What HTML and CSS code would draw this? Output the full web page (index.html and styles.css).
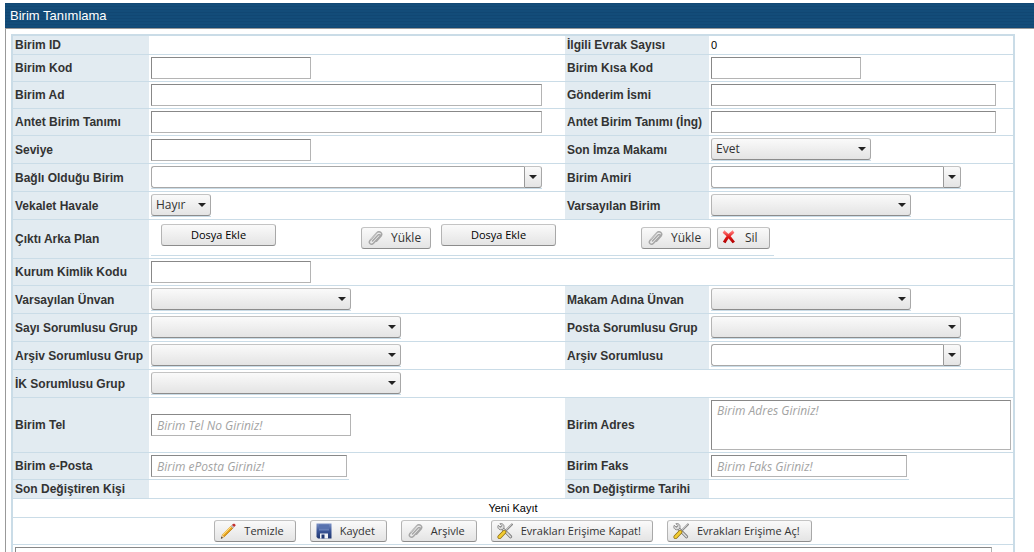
FILE: index.html
```html
<!DOCTYPE html>
<html lang="tr">
<head>
<meta charset="utf-8">
<title>Birim Tanımlama</title>
<link rel="stylesheet" href="styles.css">
</head>
<body>
<svg class="defs" aria-hidden="true">
  <defs>
    <linearGradient id="red" x1="0" y1="0" x2="0" y2="1"><stop offset="0" stop-color="#f77"/><stop offset=".5" stop-color="#e01818"/><stop offset="1" stop-color="#b00000"/></linearGradient>
    <linearGradient id="blue" x1="0" y1="0" x2="0" y2="1"><stop offset="0" stop-color="#7d93c6"/><stop offset=".5" stop-color="#3a5597"/><stop offset="1" stop-color="#1f3670"/></linearGradient>
    <symbol id="clip" viewBox="0 0 16 16"><path d="M5.500 11 10.800 5.200c1.500-1.600 3.200-.2 1.900 1.300L6.500 13.300c-2.300 2.300-5.500-.2-3.500-2.900L9.800 2.800c2.600-2.500 6.300.3 4.300 3.300L9.500 11.300" fill="none" stroke="#a6a6a6" stroke-width="1.500" stroke-linecap="round"/><path d="M3.500 9.400 10.100 2.300" fill="none" stroke="#d8d8d8" stroke-width=".7"/></symbol>
    <symbol id="cross" viewBox="0 0 16 16"><path d="M2.500 1.500C6 4 10 8.500 12.800 12.500M12.500 1.500C8.500 4.500 5.500 8 3.200 12.500" fill="none" stroke="url(#red)" stroke-width="2.900"/></symbol>
    <symbol id="pencil" viewBox="0 0 16 16"><path d="M1 15.500 2 11.800 11.500 2.300 13.800 4.500 4.300 14Z" fill="#e9a820"/><path d="M2.800 12 12 3" stroke="#ffe08a" stroke-width="1"/><path d="M3.700 14 13.500 4.500" stroke="#b97a14" stroke-width=".8"/><path d="M1 15.500 2 11.800 4.300 14Z" fill="#e8c9a0"/><path d="M.8 15.700 1.500 13.500 3 15Z" fill="#333"/><path d="M10.700 3.200 12 1.900 14.200 4.100 12.900 5.400Z" fill="#bcbcc4"/><path d="M12 1.900C13 .2 15.700.7 15.500 2.600L14.200 4.100Z" fill="#c22f2f"/></symbol>
    <symbol id="disk" viewBox="0 0 16 16"><path d="M.5.500h15v15H2l-1.500-1.500Z" fill="url(#blue)"/><path d="M3 1h10v6.500H3Z" fill="#6880b8"/><path d="M3 3h10M3 5h10" stroke="#4560a2" stroke-width=".8"/><path d="M4 10.500h8v5H4Z" fill="#f1f3f7"/><path d="M5.500 11.500h3v4h-3Z" fill="#1f3670"/></symbol>
    <symbol id="tools" viewBox="0 0 16 16"><path d="M4.500 4.500 13.500 13.700" stroke="#777" stroke-width="3.200" stroke-linecap="round"/><path d="M4.500 4.500 13.500 13.700" stroke="#ddd" stroke-width="1.600" stroke-linecap="round"/><path d="M1.200 2.300 3.500 4.300 4.900 2.700 2.900.7C5-.1 7.500 1.500 7 4.500 6.500 6.900 3.800 7.400 2 6.200.7 5.200.5 3.700 1.200 2.300Z" fill="#ddd" stroke="#777" stroke-width=".8"/><path d="M15.500.8 8 8.300" stroke="#777" stroke-width="1.900"/><path d="M15 1.200 8 8.200" stroke="#eee" stroke-width=".8"/><path d="M7.300 9 2.500 14" stroke="#8b6b10" stroke-width="4" stroke-linecap="round"/><path d="M7.300 9 2.500 14" stroke="#f2cc32" stroke-width="2.600" stroke-linecap="round"/></symbol>
  </defs>
</svg>
<main class="panel">
  <h1 class="panel-title">Birim Tanımlama</h1>
  <form class="sheet">
    <div class="row short"><span class="label">Birim ID</span><div class="cell"></div><span class="label">İlgili Evrak Sayısı</span><div class="cell"><output>0</output></div></div>
    <div class="row"><label class="label" for="kod">Birim Kod</label><div class="cell"><input class="text w160" id="kod"></div><label class="label" for="kisa">Birim Kısa Kod</label><div class="cell"><input class="text w150" id="kisa"></div></div>
    <div class="row"><label class="label" for="ad">Birim Ad</label><div class="cell"><input class="text w391" id="ad"></div><label class="label" for="gonderim">Gönderim İsmi</label><div class="cell"><input class="text w285" id="gonderim"></div></div>
    <div class="row"><label class="label" for="antet">Antet Birim Tanımı</label><div class="cell"><input class="text w391" id="antet"></div><label class="label" for="anteting">Antet Birim Tanımı (İng)</label><div class="cell"><input class="text w285" id="anteting"></div></div>
    <div class="row"><label class="label" for="seviye">Seviye</label><div class="cell"><input class="text w160" id="seviye"></div><label class="label" for="imza">Son İmza Makamı</label><div class="cell"><span class="select w160"><select id="imza"><option>Evet</option><option>Hayır</option></select></span></div></div>
    <div class="row"><label class="label" for="bagli">Bağlı Olduğu Birim</label><div class="cell"><span class="combo w391"><input id="bagli"><button type="button" aria-label="Birim seç"></button></span></div><label class="label" for="amir">Birim Amiri</label><div class="cell"><span class="combo w250"><input id="amir"><button type="button" aria-label="Amir seç"></button></span></div></div>
    <div class="row"><label class="label" for="vekalet">Vekalet Havale</label><div class="cell"><span class="select w60"><select id="vekalet"><option>Hayır</option><option>Evet</option></select></span></div><label class="label" for="varbirim">Varsayılan Birim</label><div class="cell"><span class="select w200"><select id="varbirim"><option></option></select></span></div></div>
    <div class="row wide"><span class="label">Çıktı Arka Plan</span><div class="cell"><div class="uploads">
      <div class="upload"><button type="button" class="btn pick">Dosya Ekle</button><button type="button" class="btn load"><svg class="icon"><use href="#clip"/></svg>Yükle</button></div>
      <div class="upload"><button type="button" class="btn pick">Dosya Ekle</button><button type="button" class="btn load"><svg class="icon"><use href="#clip"/></svg>Yükle</button></div>
      <button type="button" class="btn del"><svg class="icon"><use href="#cross"/></svg>Sil</button>
    </div></div></div>
    <div class="row wide"><label class="label" for="kurum">Kurum Kimlik Kodu</label><div class="cell"><input class="text w160" id="kurum"></div></div>
    <div class="row"><label class="label" for="unvan">Varsayılan Ünvan</label><div class="cell"><span class="select w200"><select id="unvan"><option></option></select></span></div><label class="label" for="makam">Makam Adına Ünvan</label><div class="cell"><span class="select w200"><select id="makam"><option></option></select></span></div></div>
    <div class="row"><label class="label" for="sayi">Sayı Sorumlusu Grup</label><div class="cell"><span class="select w250"><select id="sayi"><option></option></select></span></div><label class="label" for="posta">Posta Sorumlusu Grup</label><div class="cell"><span class="select w250"><select id="posta"><option></option></select></span></div></div>
    <div class="row"><label class="label" for="arsivgrup">Arşiv Sorumlusu Grup</label><div class="cell"><span class="select w250"><select id="arsivgrup"><option></option></select></span></div><label class="label" for="arsiv">Arşiv Sorumlusu</label><div class="cell"><span class="combo w250"><input id="arsiv"><button type="button" aria-label="Sorumlu seç"></button></span></div></div>
    <div class="row wide"><label class="label" for="ik">İK Sorumlusu Grup</label><div class="cell"><span class="select w250"><select id="ik"><option></option></select></span></div></div>
    <div class="row"><label class="label" for="tel">Birim Tel</label><div class="cell"><input class="text w200" id="tel" placeholder="Birim Tel No Giriniz!"></div><label class="label" for="adres">Birim Adres</label><div class="cell"><textarea class="text address w300" id="adres" placeholder="Birim Adres Giriniz!"></textarea></div></div>
    <div class="row contact"><label class="label" for="eposta">Birim e-Posta</label><div class="cell"><input class="text w196" id="eposta" placeholder="Birim ePosta Giriniz!"></div><label class="label" for="faks">Birim Faks</label><div class="cell"><input class="text w196" id="faks" placeholder="Birim Faks Giriniz!"></div></div>
    <div class="row short"><span class="label">Son Değiştiren Kişi</span><div class="cell"></div><span class="label">Son Değiştirme Tarihi</span><div class="cell"></div></div>
    <div class="status">Yeni Kayıt</div>
    <div class="actions">
      <button type="reset" class="btn"><svg class="icon"><use href="#pencil"/></svg>Temizle</button>
      <button type="button" class="btn"><svg class="icon"><use href="#disk"/></svg>Kaydet</button>
      <button type="button" class="btn"><svg class="icon"><use href="#clip"/></svg>Arşivle</button>
      <button type="button" class="btn"><svg class="icon"><use href="#tools"/></svg>Evrakları Erişime Kapat!</button>
      <button type="button" class="btn"><svg class="icon"><use href="#tools"/></svg>Evrakları Erişime Aç!</button>
    </div>
    <div class="notes"><textarea class="text" aria-label="Açıklama"></textarea></div>
  </form>
</main>
</body>
</html>
```
FILE: styles.css
```css
*, *::before, *::after { box-sizing: border-box; }
body { margin: 0; background: #fff; color: #000; font: 11px/18px "Liberation Sans", Arial, sans-serif; }
.defs { position: absolute; width: 0; height: 0; }
.panel { height: 100vh; overflow: hidden; padding: 3px 0 0 5px; }
.panel-title {
  margin: 0; padding: 0 5px; height: 25px;
  font-size: 13px; line-height: 25px; font-weight: normal; color: #fff;
  background: repeating-linear-gradient(#114773 0 1px, #134c79 1px 3px);
}
.sheet {
  border-top: 1px solid #999; border-left: 1px solid #999;
  padding: 5px 19px 0 5px;
}
.row, .status, .actions, .notes { border: solid #cadce7; border-width: 0 2px 1px; }
.row:first-child { border-top-width: 2px; }
.row { display: grid; grid-template-columns: 136px minmax(0, 416fr) 144px minmax(0, 304fr); }
.row.wide { grid-template-columns: 136px minmax(0, 1fr); }
.label {
  display: flex; align-items: center; padding: 0 2px;
  background: #e2ebf1; color: #333; font-weight: bold; font-size: 12px; white-space: nowrap;
}
.cell { display: flex; align-items: center; padding: 2px; min-width: 0; }
.short .cell { padding: 0 2px; }
.short { min-height: 19px; }

.text {
  display: block; height: 22px; margin: 0; padding: 0 5px;
  border: 1px solid; border-color: #888 #b4b4b4 #b4b4b4 #888; border-radius: 0; background: #fff;
  font: 12px/18px "Open Sans", "Noto Sans", sans-serif; resize: none; outline: none;
}
.text::placeholder { color: #a3a3a3; font-style: italic; }
.address { height: 50px; padding-top: 1px; }

.select { position: relative; display: block; border-bottom: 1px solid #cadce7; }
.select::after {
  content: ""; position: absolute; right: 5px; top: 9px;
  border: solid transparent; border-width: 4px 4px 0; border-top-color: #222; pointer-events: none;
}
.select select {
  appearance: none; display: block; width: 100%; height: 22px; margin: 0; padding: 0 4px;
  font: 12px/18px "Open Sans", "Noto Sans", sans-serif; color: #333;
}
.select select, .btn, .combo button {
  border: 1px solid; border-color: #c4c4c4 #a8a8a8 #8c8c8c #b4b4b4; border-radius: 3px;
  background: linear-gradient(#fafafa, #e4e4e4);
}
.combo { display: flex; border-bottom: 1px solid #cadce7; }
.combo input {
  flex: 1; min-width: 0; height: 22px; margin: 0; padding: 0 5px;
  border: 1px solid #a8a8a8; border-right: 0; border-radius: 3px 0 0 3px; outline: none;
}
.combo button {
  display: flex; align-items: center; justify-content: center;
  width: 18px; height: 22px; padding: 0; border-left-color: #999; border-radius: 0 3px 3px 0;
}
.combo button::before { content: ""; border: solid transparent; border-width: 4px 4px 0; border-top-color: #222; }

.btn {
  display: flex; align-items: center; height: 22px; margin: 0; padding: 0 11px 0 5px; gap: 8px;
  font: 12px/18px "Open Sans", "Noto Sans", sans-serif; color: #333; white-space: nowrap;
}
.icon { width: 16px; height: 16px; flex: none; }
.uploads { display: flex; align-items: center; border-bottom: 1px solid #cadce7; padding: 2px 4px 3px 0; }
.upload { display: flex; justify-content: space-between; align-items: center; width: 280px; height: 28px; padding-left: 10px; }
.pick { width: 115px; padding: 0; justify-content: center; align-self: flex-start; color: #000; font-size: 11px; }
.load { width: 70px; }
.del { width: 53px; padding-left: 3px; margin-left: 6px; }

.contact { border-bottom: 0; }
.contact .label, .contact .cell::after { border-bottom: 1px solid #cadce7; }
.contact .cell { display: block; padding-bottom: 0; }
.contact .cell::after { content: ""; display: block; width: 200px; height: 3px; margin-left: -2px; }

.status { height: 19px; text-align: center; }
.actions { display: flex; justify-content: center; gap: 14px; padding: 2px; }
.actions .btn { font-size: 11px; }
.notes { padding: 2px 21px 0 2px; }
.notes .text { width: 100%; height: 60px; }

.w60 { width: 60px; }
.w150 { width: 150px; }
.w160 { width: 160px; }
.w196 { width: 196px; }
.w200 { width: 200px; }
.w250 { width: 250px; }
.w285 { width: 285px; }
.w300 { width: 300px; }
.w391 { width: 391px; }
```
